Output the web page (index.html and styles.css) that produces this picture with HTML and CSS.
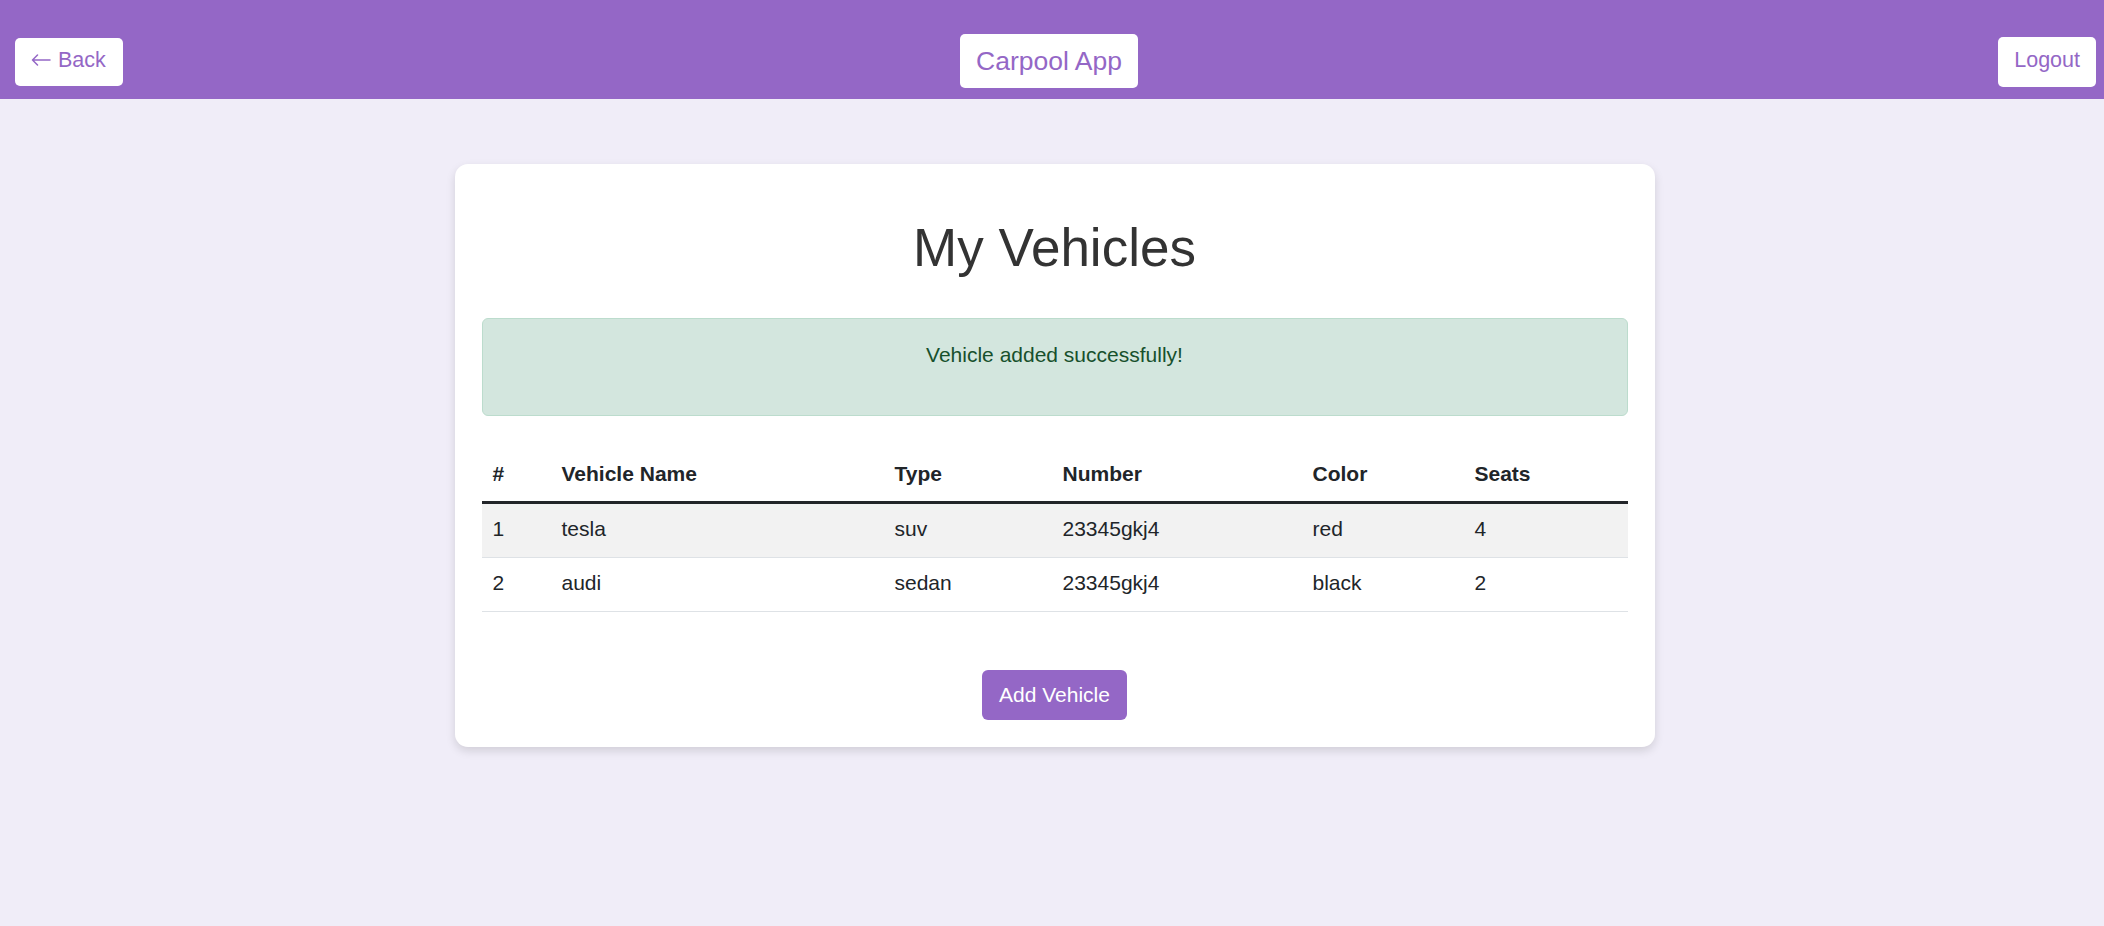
FILE: index.html
```html
<!DOCTYPE html>
<html lang="en">
<head>
<meta charset="utf-8">
<title>Carpool App - My Vehicles</title>
<link rel="stylesheet" href="styles.css">
</head>
<body>
<header class="topbar">
  <div class="left"><button class="nav-btn back-btn"><svg class="arrow" width="20" height="12" viewBox="0 0 20 12" aria-hidden="true"><path d="M19 6H1.5M6.5 1L1.5 6l5 5" fill="none" stroke="currentColor" stroke-width="1.5" stroke-linecap="round" stroke-linejoin="round"/></svg>Back</button></div>
  <div class="brand">Carpool App</div>
  <div class="right"><button class="nav-btn logout-btn">Logout</button></div>
</header>
<main class="page">
  <section class="card">
    <h1 class="title">My Vehicles</h1>
    <div class="alert-success"><p>Vehicle added successfully!</p></div>
    <table class="vehicles">
      <colgroup>
        <col class="c-num"><col class="c-name"><col class="c-type"><col class="c-number"><col class="c-color"><col class="c-seats">
      </colgroup>
      <thead>
        <tr><th>#</th><th>Vehicle Name</th><th>Type</th><th>Number</th><th>Color</th><th>Seats</th></tr>
      </thead>
      <tbody>
        <tr class="striped"><td>1</td><td>tesla</td><td>suv</td><td>23345gkj4</td><td>red</td><td>4</td></tr>
        <tr><td>2</td><td>audi</td><td>sedan</td><td>23345gkj4</td><td>black</td><td>2</td></tr>
      </tbody>
    </table>
    <div class="actions"><button class="add-btn">Add Vehicle</button></div>
  </section>
</main>
</body>
</html>
```
FILE: styles.css
```css
* { box-sizing: border-box; }
html, body { margin: 0; padding: 0; }
body {
  background: #f0edf8;
  font-family: "Liberation Sans", Arial, Helvetica, sans-serif;
  color: #212529;
  font-size: 21px;
  min-height: 926px;
}
.topbar {
  height: 99px;
  background: #9467c6;
  display: grid;
  grid-template-columns: 1fr auto 1fr;
  align-items: center;
  padding: 24px 8px 0 8px;
}
.left { display: flex; justify-content: flex-start; padding-left: 7px; }
.right { display: flex; justify-content: flex-end; }
.nav-btn {
  background: #fff;
  color: #9467c6;
  border: none;
  border-radius: 5px;
  font-family: inherit;
  font-size: 21.5px;
  line-height: 30px;
  cursor: pointer;
  display: flex;
  align-items: center;
}
.arrow { width: 20px; height: 12px; margin-right: 7px; margin-top: 1px; }
.back-btn { padding: 7px 17px 11px 16px; }
.logout-btn { padding: 8px 16px 12px; }
.brand {
  background: #fff;
  color: #9467c6;
  border-radius: 5px;
  font-size: 26.5px;
  line-height: 32px;
  padding: 11px 16px;
  margin-top: -2px;
  margin-right: 6px;
}
.page {
  display: flex;
  justify-content: center;
  padding-top: 65px;
  padding-left: 5px;
}
.card {
  width: 1200px;
  background: #fff;
  border-radius: 13px;
  box-shadow: 0 4px 10px rgba(0, 0, 0, 0.13);
  padding: 27px;
}
.title {
  margin: 25px 0 38px;
  text-align: center;
  font-size: 53px;
  line-height: 64px;
  font-weight: 400;
  color: #333;
}
.alert-success {
  background: #d3e6de;
  border: 1px solid #bcdccd;
  border-radius: 6px;
  color: #17502c;
  text-align: center;
  padding: 20px 21px 23px;
  margin-bottom: 32px;
}
.alert-success p {
  margin: 0 0 21px;
  line-height: 32px;
}
.vehicles {
  width: 100%;
  border-collapse: separate;
  border-spacing: 0;
  table-layout: fixed;
}
.c-num { width: 69px; }
.c-name { width: 333px; }
.c-type { width: 168px; }
.c-number { width: 250px; }
.c-color { width: 162px; }
.c-seats { width: 164px; }
.vehicles th, .vehicles td {
  text-align: left;
  line-height: 33px;
  font-size: 21px;
}
.vehicles td {
  padding: 8px 11px 12px;
  border-bottom: 1px solid #dee2e6;
}
.vehicles th {
  font-weight: 700;
  padding: 9px 11px 11px;
  border-bottom: 3px solid #222529;
}
.vehicles tr.striped td { background: #f2f2f2; }
.actions {
  display: flex;
  justify-content: center;
  margin-top: 58px;
}
.add-btn {
  background: #9467c6;
  color: #fff;
  border: none;
  border-radius: 6px;
  font-family: inherit;
  font-size: 21px;
  line-height: 32px;
  padding: 9px 17px;
  cursor: pointer;
}
```
